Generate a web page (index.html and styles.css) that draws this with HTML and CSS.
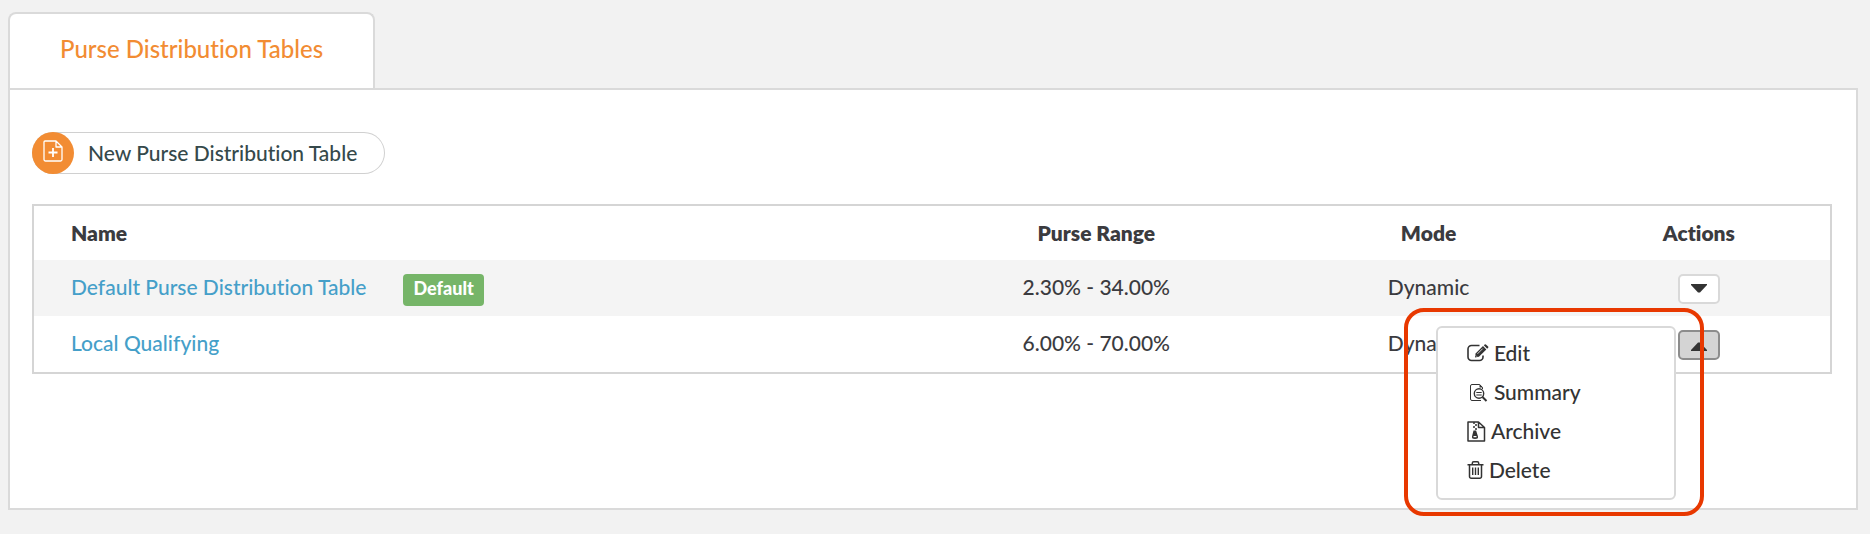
FILE: index.html
```html
<!DOCTYPE html>
<html lang="en">
<head>
<meta charset="utf-8">
<title>Purse Distribution Tables</title>
<link rel="stylesheet" href="styles.css">
</head>
<body>
<nav class="tabs"><a class="tab" href="#tables">Purse Distribution Tables</a></nav>
<main class="panel" id="tables">
  <button class="new-button" type="button">
    <span class="new-icon">
      <svg width="20" height="22" viewBox="0 0 20 22" fill="none" stroke="#fff" stroke-width="1.3" stroke-linejoin="round"><path d="M2 1h11l6 6v12.500a1.500 1.500 0 0 1-1.500 1.500h-15A1.500 1.500 0 0 1 1 19.500V2a1 1 0 0 1 1-1zM13 1v6h6"/><path d="M10 8v9M5.500 12.500h9" stroke-width="1.800"/></svg>
    </span>
    <span class="new-label">New Purse Distribution Table</span>
  </button>
  <table class="grid">
    <thead>
      <tr><th class="name">Name</th><th class="range">Purse Range</th><th class="mode">Mode</th><th class="actions">Actions</th></tr>
    </thead>
    <tbody>
      <tr>
        <td><div class="name-cell"><a class="link" href="#default">Default Purse Distribution Table</a><span class="badge">Default</span></div></td>
        <td>2.30% - 34.00%</td>
        <td>Dynamic</td>
        <td>
          <div class="dropdown"><button class="toggle" type="button" aria-label="Open actions"><svg width="16" height="9" viewBox="0 0 16 9"><path d="M0 0h16v1L9 8.500H7L0 1z" fill="#333"/></svg></button></div>
        </td>
      </tr>
      <tr>
        <td><div class="name-cell"><a class="link" href="#local">Local Qualifying</a></div></td>
        <td>6.00% - 70.00%</td>
        <td>Dynamic</td>
        <td>
          <div class="dropdown">
            <button class="toggle open" type="button" aria-label="Close actions" aria-expanded="true"><svg width="16" height="9" viewBox="0 0 16 9"><path d="M0 9h16V8L9 .5H7L0 8z" fill="#333"/></svg></button>
            <div class="menu">
              <a class="item" href="#edit"><svg width="22" height="18" viewBox="0 0 22 18"><path d="M12.500 1.500H4.500A3.500 3.500 0 0 0 1 5v8a3.500 3.500 0 0 0 3.500 3.500h8A3.500 3.500 0 0 0 16 13v-1.500" fill="none" stroke="#333" stroke-width="1.600"/><path d="M8 13.500l.6-4 7.400-7.400 3.300 3.300-7.400 7.400z" fill="#333"/><path d="M16.800 1.300l.9-.9q.6-.5 1.200 0l2.200 2.200q.5.600 0 1.200l-.9.900z" fill="#333"/><path d="M10.500 9.800l5.200-5.200M8.900 11.600l1 1" stroke="#fff" stroke-width=".8"/></svg>Edit</a>
              <a class="item" href="#summary"><svg width="22" height="19" viewBox="0 0 22 19" fill="none" stroke="#333"><path d="M15.500 6V4.500L12.500 1.500H5A1.500 1.500 0 0 0 3.500 3v13A1.500 1.500 0 0 0 5 17.500h9"/><path d="M12.500 1v3.500H16z" fill="#333" stroke="none"/><circle cx="12" cy="10.500" r="4.700" stroke-width="1.400"/><path d="M9.300 9.500h5.400M9.300 12h5.400" stroke-width="1.200"/><path d="M15.500 14l4 4" stroke-width="2"/></svg>Summary</a>
              <a class="item" href="#archive"><svg width="19" height="21" viewBox="0 0 19 21" fill="none" stroke="#333"><path d="M1 1h10.500L17.500 6.500V20H1zM11.500 1v5.500h6" stroke-width="1.500" stroke-linejoin="round"/><path d="M6 2h2M8 4h2M6 6h2M8 8h2" stroke-width="1.600"/><path fill="#333" stroke="none" fill-rule="evenodd" d="M6.500 9.500h2.600L11 15.500q.5 2.500-3 2.500t-3-2.500zM6.500 15v1.300h3V15z"/></svg>Archive</a>
              <a class="item" href="#delete"><svg width="17" height="18" viewBox="0 0 17 18" fill="none" stroke="#333" stroke-width="1.500"><path d="M.5 3.700h16M2.500 4v11.500A1.700 1.700 0 0 0 4.200 17.200h8.600A1.700 1.700 0 0 0 14.500 15.500V4M5.300 3.500V2.200Q5.300.8 6.700.8h3.600q1.400 0 1.400 1.400v1.300"/><path d="M5.700 6.500v7.500M8.500 6.500v7.500M11.300 6.500v7.500" stroke-width="1.400"/></svg>Delete</a>
              <span class="highlight"></span>
            </div>
          </div>
        </td>
      </tr>
    </tbody>
  </table>
</main>
</body>
</html>
```
FILE: styles.css
```css
* { box-sizing: border-box; }
body {
  margin: 0;
  padding: 12px 12px 24px 8px;
  background: #f2f2f2;
  color: #3b3b3f;
  font-family: Lato, sans-serif;
  font-size: 21px;
  font-weight: 500;
  font-variant-ligatures: none;
  line-height: 28px;
}
a { text-decoration: none; }
svg { display: block; flex: none; }
.tabs { display: flex; }
.tab {
  padding: 20px 50px 24px;
  border: 2px solid #dadada;
  border-bottom: 0;
  border-radius: 8px 8px 0 0;
  background: #fff;
  color: #f28c33;
  font-size: 24px;
  line-height: 30px;
}
.panel {
  padding: 42px 24px 134px 22px;
  border: 2px solid #dadada;
  background: #fff;
}
.new-button {
  display: flex;
  align-items: center;
  height: 42px;
  margin: 0 0 30px;
  padding: 0 28px 0 0;
  border: 0;
  border-radius: 21px;
  background: #fff;
  box-shadow: inset 0 0 0 1px #d0d0d0;
  color: #35494b;
  font: inherit;
  font-variant-ligatures: none;
}
.new-icon {
  display: flex;
  align-items: center;
  justify-content: center;
  width: 42px;
  height: 42px;
  padding-bottom: 4px;
  border-radius: 50%;
  background: #f28c33;
}
.new-label { padding: 0 0 0 14px; }
.grid {
  width: 100%;
  table-layout: fixed;
  border: 2px solid #d5d5d5;
  border-collapse: separate;
  border-spacing: 0;
  text-align: center;
}
.grid th { height: 54px; padding: 0; font-weight: 800; }
.grid td { height: 56px; padding: 0 0 2px; }
.grid tbody tr:nth-child(odd) { background: #f4f4f4; }
.grid .name { width: 48.4%; padding-left: 37px; text-align: left; }
.range { width: 21.5%; }
.mode { width: 15.5%; }
.name-cell { display: flex; align-items: center; padding-left: 37px; }
.link { color: #459fc9; }
.badge {
  margin: 6px 0 0 37px;
  padding: 0 10px 4px;
  border-radius: 4px;
  background: #76b568;
  color: #fff;
  font-size: 18px;
  font-weight: 900;
}
.dropdown { position: relative; width: 42px; margin: 4px auto 0; }
.toggle {
  display: flex;
  align-items: center;
  justify-content: center;
  width: 42px;
  height: 30px;
  padding: 0 0 2px;
  border: 2px solid #d9d9d9;
  border-radius: 5px;
  background: #fff;
}
.toggle.open { border-color: #8c8c8c; background: #d4d4d4; padding: 2px 0 0; }
.menu {
  position: absolute;
  top: -4px;
  right: 44px;
  display: flex;
  flex-direction: column;
  gap: 11px;
  width: 240px;
  padding: 11px 29px 14px;
  border: 2px solid #d9d9d9;
  border-radius: 6px;
  background: #fff;
}
.item { display: flex; align-items: center; gap: 5px; color: #333; }
.highlight {
  position: absolute;
  top: -20px;
  right: -30px;
  bottom: -18px;
  left: -34px;
  border: 4px solid #e83800;
  border-radius: 20px;
  pointer-events: none;
}
```
